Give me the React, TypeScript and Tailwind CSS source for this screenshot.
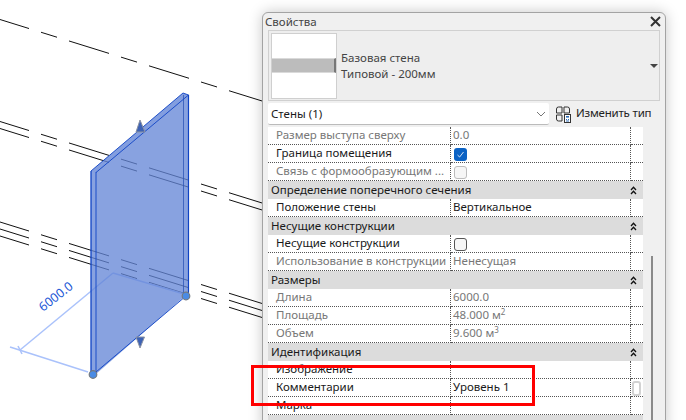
import type { ReactNode } from 'react';

const FONT = "font-['Noto_Sans','Liberation_Sans',sans-serif]";

// x-ranges of one repeat of the hidden-line dashes, the same for every line
const DASHES = [
  [0, 29], [41, 57], [69, 109], [121, 137], [149, 189], [201, 217], [229, 262],
];
const LINE_STARTS = [19.5, 121.5, 128.5, 222, 229, 236];

function WallView() {
  return (
    <svg width="262" height="420" viewBox="0 0 262 420" className="block shrink-0">
      {LINE_STARTS.map((y0) =>
        DASHES.map(([a, b]) => (
          <line key={`${y0}-${a}`} x1={a} y1={y0 + a * 0.311} x2={b} y2={y0 + b * 0.311} stroke="#111" strokeWidth="1" />
        )),
      )}

      {/* dimension */}
      <g stroke="#aac2fb" strokeWidth="1.5" fill="none">
        <path d="M20 350L113 273" />
        <path d="M10 347L88 372" />
        <path d="M113 273L184 294" />
        <path d="M18 346L22 354" />
      </g>
      <text x="43" y="312" transform="rotate(-38 43 312)" fontSize="12.5" fill="#1a56d6" fontFamily="Noto Sans">
        6000.0
      </text>

      {/* wall */}
      <path d="M91 171L183 93L188.5 95V293L96 374H91Z" fill="#6385d6" fillOpacity="0.76" />
      <path d="M91 171L183 93L188.5 95L96 172.5Z" fill="#5f83dc" fillOpacity="0.12" />
      <path d="M91 171V374" stroke="#0f43c4" strokeWidth="1.3" />
      <path d="M96 172V374" stroke="#0f43c4" strokeWidth="0.9" />
      <path d="M183.5 95V293" stroke="#2f57b8" strokeWidth="0.8" />
      <path d="M188.5 95V293" stroke="#0f43c4" strokeWidth="1.2" />
      <path d="M91 171L183 93L188.5 95M96 172.5L188.5 95" stroke="#0f43c4" strokeWidth="0.9" fill="none" />
      <path d="M96 372L186 296M91 374H96" stroke="#0f43c4" strokeWidth="0.9" fill="none" />

      {/* flip arrows */}
      <path d="M140 120L136 132H145Z" fill="#3d62b4" stroke="#8c93a3" strokeWidth="1" />
      <path d="M136 337H144.5L140 348Z" fill="#3d62b4" stroke="#8c93a3" strokeWidth="1" />

      {/* end grips */}
      <circle cx="186" cy="296" r="3.8" fill="#4a8be4" stroke="#73797f" strokeWidth="1.2" />
      <circle cx="93" cy="374.5" r="3.8" fill="#4a8be4" stroke="#73797f" strokeWidth="1.2" />
    </svg>
  );
}

function Collapse() {
  return (
    <svg width="7" height="9" viewBox="0 0 7 9" fill="none" stroke="#111" strokeWidth="1.3">
      <path d="M1 4L3.5 1.3L6 4M1 8L3.5 5.3L6 8" />
    </svg>
  );
}

function Header({ title }: { title: string }) {
  return (
    <div className="flex h-[18px] items-center justify-between bg-[#dcdcdc] pl-[3px] pr-[6px] text-[#1a1a1a]">
      <span>{title}</span>
      <Collapse />
    </div>
  );
}

function Row({ name, value, off, thumb }: { name: string; value?: ReactNode; off?: boolean; thumb?: boolean }) {
  return (
    <div className={`grid h-[18px] grid-cols-[183px_180px_12px] bg-white leading-[15px] ${off ? 'text-[#777]' : 'text-[#1a1a1a]'}`}>
      <div className="truncate border-r border-b border-dotted border-[#555] pl-[8px]">{name}</div>
      <div className="border-r border-b border-dotted border-[#555] pl-[2px]">{value}</div>
      <div className="border-b border-dotted border-[#555] pl-[1px]">
        {thumb && <div className="mt-[2px] h-[15px] w-[9px] rounded-[3px] border-2 border-[#d2d2d2] bg-white" />}
      </div>
    </div>
  );
}

function Check({ checked, off }: { checked?: boolean; off?: boolean }) {
  if (checked) {
    return (
      <div className="ml-[1px] mt-[3px] flex h-[13px] w-[13px] items-center justify-center rounded-[3px] bg-[#0b62c4]">
        <svg width="9" height="9" viewBox="0 0 9 9" fill="none" stroke="#e8f0fb" strokeWidth="0.9">
          <path d="M1.5 5L3.6 7L7.5 2" />
        </svg>
      </div>
    );
  }
  return <div className={`ml-[1px] mt-[3px] h-[13px] w-[13px] rounded-[3px] border bg-[#f6f6f6] ${off ? 'border-[#bdbdbd]' : 'border-[#555]'}`} />;
}

function EditTypeIcon() {
  return (
    <svg width="16" height="17" viewBox="0 0 16 17" fill="none" stroke="#333" strokeWidth="1">
      <path d="M1.5 3A2 2 0 0 1 3.5 1H7V7H1.5ZM9 1H12.5A2 2 0 0 1 14.5 3V7H9ZM1.5 9H7V15H3.5A2 2 0 0 1 1.5 13Z" />
      <rect x="9.5" y="8.5" width="6" height="8" fill="#fff" />
      <rect x="11" y="10" width="3" height="1.6" fill="#2f6db5" stroke="none" />
      <path d="M11 13.5H12M13 13.5H14M11 15H14" stroke="#2f6db5" />
    </svg>
  );
}

function Sup({ children }: { children: string }) {
  return <sup className="text-[8px] leading-none">{children}</sup>;
}

function PropertiesPanel() {
  return (
    <div className="relative mt-3 h-[420px] w-[404px] shrink-0 rounded-t-[6px] border border-[#a3a3a3] bg-[#f0f0f0] pl-[5px] shadow-[0_0_14px_rgba(0,0,0,0.22)]">
      <div className="flex h-[17px] items-center justify-between pr-[3px] text-[#444]">
        <span className="-ml-[3px]">Свойства</span>
        <svg width="11" height="11" viewBox="0 0 11 11" stroke="#333" strokeWidth="2" className="mr-[1px]">
          <path d="M1 1L10 10M10 1L1 10" />
        </svg>
      </div>

      <div className="flex h-[71px] w-[392px] items-center border border-[#d0d0d0] bg-[#eeeeee] pl-[2px] pr-[1px] text-[#444]">
        <div className="flex h-[66px] w-[66px] shrink-0 flex-col justify-center border border-[#cfcfcf] bg-white">
          <div className="h-[15px] border-y border-[#dadada] border-r-2 border-r-[#777] bg-[#bcbcbc]" />
        </div>
        <div className="ml-[4px] flex-1 leading-[16px]">
          <div>Базовая стена</div>
          <div>Типовой - 200мм</div>
        </div>
        <div className="h-0 w-0 border-x-[4px] border-t-[4px] border-x-transparent border-t-[#444]" />
      </div>

      <div className="mt-[2px] flex h-[22px] items-center">
        <div className="flex h-[22px] w-[281px] items-center justify-between rounded-[2px] border-b border-[#bbb] bg-white pl-[3px] pr-[3px] text-[#1a1a1a]">
          <span>Стены (1)</span>
          <svg width="10" height="6" viewBox="0 0 10 6" fill="none" stroke="#777" strokeWidth="1">
            <path d="M1 1L5 5L9 1" />
          </svg>
        </div>
        <div className="ml-[6px] flex items-center gap-[5px] tracking-[-0.2px] text-[#222]">
          <EditTypeIcon />
          <span className="-mt-[2px]">Изменить тип</span>
        </div>
      </div>

      <div className="mt-[2px] flex">
        <div className="w-[375px] shrink-0">
          <Row name="Размер выступа сверху" value="0.0" off />
          <Row name="Граница помещения" value={<Check checked />} />
          <Row name="Связь с формообразующим ..." value={<Check off />} off />
          <Header title="Определение поперечного сечения" />
          <Row name="Положение стены" value="Вертикальное" />
          <Header title="Несущие конструкции" />
          <Row name="Несущие конструкции" value={<Check />} />
          <Row name="Использование в конструкции" value="Ненесущая" off />
          <Header title="Размеры" />
          <Row name="Длина" value="6000.0" off />
          <Row name="Площадь" value={<span>48.000 м<Sup>2</Sup></span>} off />
          <Row name="Объем" value={<span>9.600 м<Sup>3</Sup></span>} off />
          <Header title="Идентификация" />
          <Row name="Изображение" />
          <Row name="Комментарии" value="Уровень 1" thumb />
          <Row name="Марка" />
          <Header title="Стадии" />
        </div>
        <div className="flex-1 pl-[8px]">
          <div className="mt-[129px] h-[200px] w-[2px] bg-[#8a8a8a]" />
        </div>
      </div>
    </div>
  );
}

export default function App() {
  return (
    <div className={`relative flex h-[420px] w-[686px] overflow-hidden bg-white text-[11.5px] ${FONT}`}>
      <WallView />
      <PropertiesPanel />
      {/* red annotation drawn over the screenshot */}
      <div className="absolute left-[251px] top-[365px] h-[41px] w-[284px] border-[3px] border-[#ff0000]" />
    </div>
  );
}
